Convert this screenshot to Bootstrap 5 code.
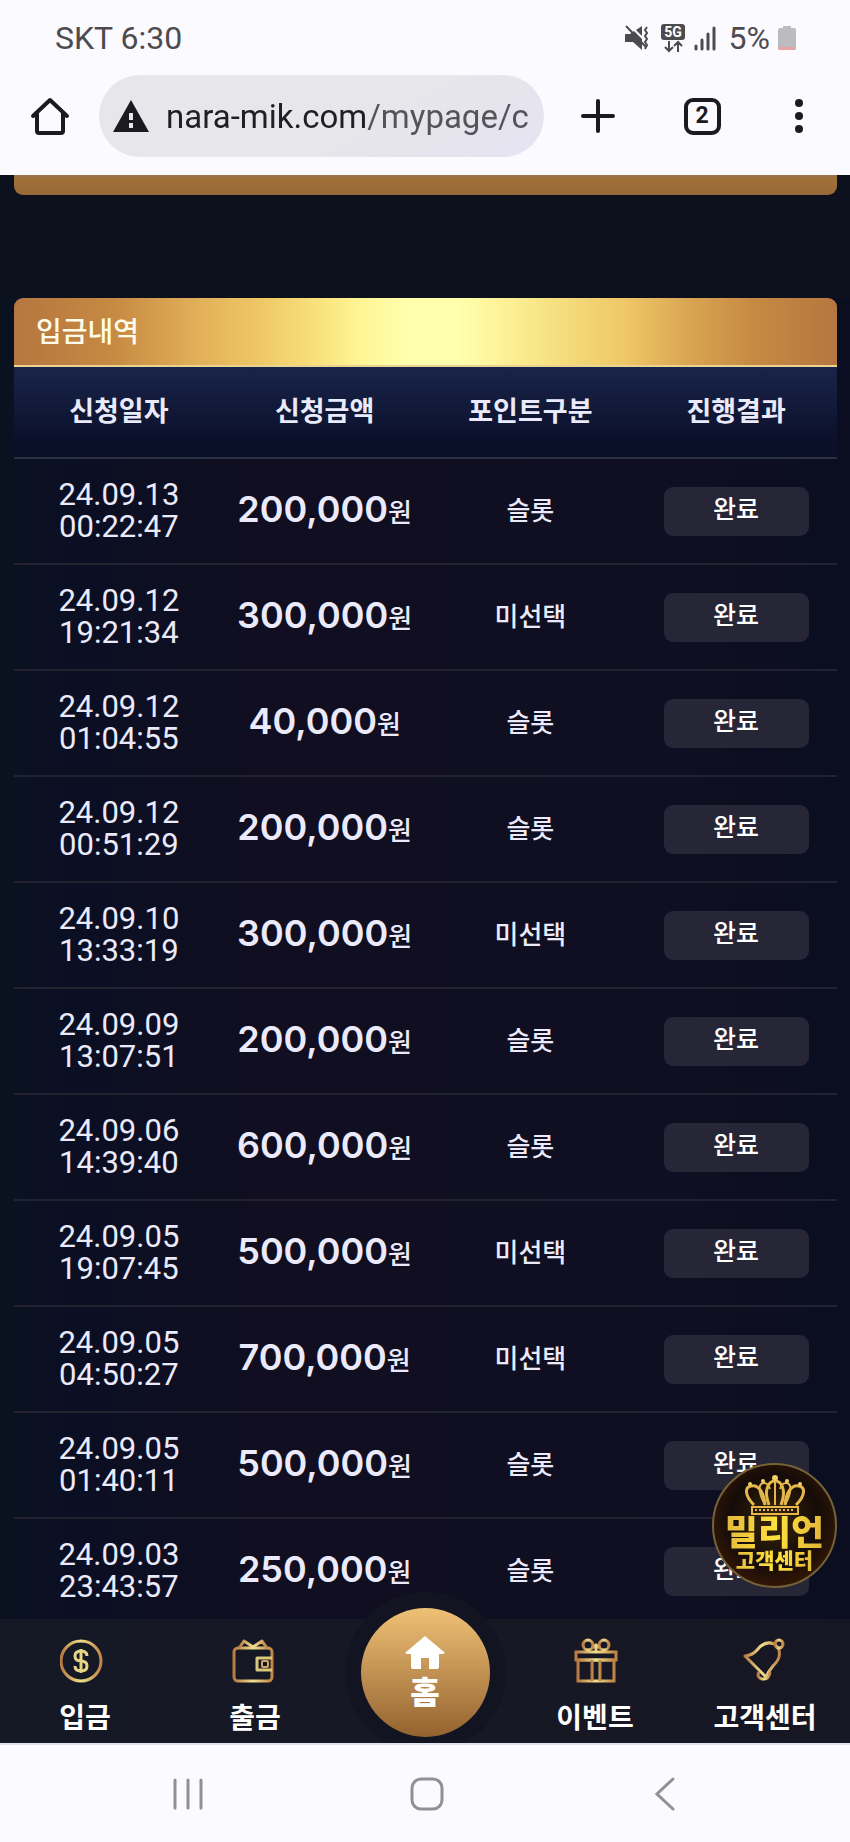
<!DOCTYPE html>
<html lang="ko">
<head>
<meta charset="utf-8">
<meta name="viewport" content="width=device-width, initial-scale=1">
<title>입금내역</title>
<link href="https://cdn.jsdelivr.net/npm/bootstrap@5.3.0/dist/css/bootstrap.min.css" rel="stylesheet">
<style>
  body { font-family: Roboto, "Noto Sans CJK KR", sans-serif; background: #fbfaff; color: #eaeafa; }
  .status-bar { height: 75px; padding: 0 54px 0 55px; color: #4d4b50; font-size: 32px; }
  .status-bar svg, .tool-bar svg { display: block; }
  .tool-bar { height: 82px; padding: 0 30px 0 22px; margin-bottom: 18px; color: #1b1a20; }
  .tool-btn { border: 0; background: none; padding: 0; color: inherit; display: flex; flex-shrink: 0; align-items: center; justify-content: center; width: 56px; height: 56px; }
  .url-pill { background: linear-gradient(150deg, #e7e6eb 60%, #e4e3f1); min-width: 0; height: 82px; padding: 0 16px 0 13px; margin: 0 26px 0 21px; }
  .url-pill input { border: 0; outline: 0; padding: 0; font-size: 33px; height: 60px; min-width: 0; width: 100%;
    color: transparent; background: linear-gradient(90deg, #201f25 200px, #54525a 200px); -webkit-background-clip: text; background-clip: text; }
  .tab-count { width: 37px; height: 37px; border: 4px solid #1b1a20; border-radius: 9px; font-size: 23px; font-weight: 700; line-height: 28px; }
  .site { padding: 0 13px 0 14px; background: linear-gradient(90deg, #0a1220, #0b0f24 8%, #100e20 30%, #100e22 80%, #0a0e20); }
  .site-top { margin: 0 -13px 0 -14px; padding: 0 13px 0 14px; height: 123px; background: #0d111d; }
  .prev-card { height: 20px; border-radius: 0 0 9px 9px; background: linear-gradient(#977449, #a07038 20%, #996839); }
  .gold-title { height: 69px; margin: 0; padding: 2px 22px 0; font-size: 28px; font-weight: 500; color: #fffbea; border-radius: 9px 9px 0 0; border-bottom: 2px solid #e9d494;
    background: linear-gradient(90deg, #b67640, #c68a42 12%, #e3b25a 23%, #efc866 30%, #f7de78 36%, #fff595 42%, #ffffae 48%, #ffffae 54%, #fdf095 60%, #f3d978 68%, #f0c868 74%, #d9a552 82%, #c68a42 90%, #b67640); }
  .history { table-layout: fixed; width: 100%; text-align: center; border-collapse: separate; border-spacing: 0; }
  .history th { height: 92px; padding: 0 0 0 4px; font-size: 27px; font-weight: 700; border-bottom: 2px solid #2c3043; background: linear-gradient(#19244a, #0b1029 85%); }
  .history td { height: 106px; padding: 0 0 0 4px; vertical-align: middle; border-bottom: 2px solid #222230; font-size: 26px; font-weight: 500; }
  .history td.when { font-size: 31px; font-weight: 400; line-height: 32px; }
  .amount { font-family: Inter, "Noto Sans CJK KR", sans-serif; font-size: 36px; font-weight: 600; line-height: 40px; }
  .won { font-size: 26px; font-weight: 500; }
  .done { width: 145px; height: 49px; border: 0; border-radius: 9px; background: #262637; color: #fff; font-size: 25px; font-weight: 500; padding: 0 0 2px; line-height: 40px; }
  .dock { height: 124px; background: linear-gradient(90deg, #151925, #171723); position: relative; clip-path: inset(-40px 0 0 0); }
  .dock a { flex: 1 1 0; color: #fff; text-decoration: none; font-size: 28px; font-weight: 700; line-height: 36px; text-align: center; }
  .dock-link { padding-top: 17px; }
  .dock-link svg { display: block; margin: 0 auto 15px; }
  .home-ball { width: 129px; height: 129px; margin: -11px auto 0; border-radius: 50%; background: linear-gradient(#efc176, #94622f); box-shadow: 0 0 0 16px #131422; padding-top: 28px; font-size: 32px; font-weight: 900; }
  .home-ball svg { display: block; margin: 0 auto 5px; }
  .help { position: absolute; right: 13px; bottom: 254px; width: 125px; height: 125px; border: 2px solid #756236; border-radius: 50%; text-decoration: none; text-align: center;
    background: radial-gradient(circle at 50% 45%, #3a240d, #140c08 50%, #341706 75%, #0e0a08); z-index: 3; }
  .help svg { display: block; margin: 9px auto 0; }
  .help span { display: block; font-weight: 900; white-space: nowrap; background: linear-gradient(100deg, #d9aa3e, #ffe23c 50%, #d7a437); -webkit-background-clip: text; background-clip: text; color: transparent; }
  .help .brand { font-size: 36px; line-height: 34px; margin: 0 -4px; }
  .help .desk { font-size: 21px; line-height: 22px; }
  .system-nav { height: 99px; padding: 0 157px 0 160px; border-top: 2px solid #e2e2ee; }
  .system-nav .tool-btn { color: #929097; }
</style>
</head>
<body>
<div class="d-flex flex-column vh-100 position-relative overflow-hidden">
  <header>
    <div class="status-bar d-flex align-items-center">
      <span class="me-auto">SKT 6:30</span>
      <svg width="24" height="26" viewBox="0 0 24 26" fill="currentColor"><path d="M0 9h5l4-3 8 8v11l-9-8H0zM11 5l6-4v10z"/><path d="M1 1l20 21" stroke="currentColor" stroke-width="2"/><path d="M22 2l-2 3 2 3-2 3 2 3-2 3 2 3-2 4" fill="none" stroke="currentColor" stroke-width="2"/></svg>
      <svg class="ms-2" width="32" height="30" viewBox="0 0 32 30"><rect x="4" y="1" width="24" height="16" rx="3" fill="#4d4b50"/><text x="16" y="14" text-anchor="middle" font-size="14" font-weight="700" font-family="Roboto" fill="#fff">5G</text><path d="M12 18v10m-4-4l4 4 4-4M21 29V19m-4 4l4-4 4 4" fill="none" stroke="#4d4b50" stroke-width="2"/></svg>
      <svg class="ms-1" width="24" height="26" viewBox="0 0 24 26" stroke="currentColor" stroke-width="3" stroke-linecap="round"><path d="M3 21v3M9 15v9M15 9v15M21 3v21"/></svg>
      <span class="ms-2 ps-1">5%</span>
      <svg class="ms-2" width="18" height="26" viewBox="0 0 18 26"><path d="M5 1h8v2h3q2 0 2 2v18q0 2-2 2H2q-2 0-2-2V5q0-2 2-2h3z" fill="#bcbbc0"/><path d="M0 22h18v1q0 2-2 2H2q-2 0-2-2z" fill="#e5a4a4"/></svg>
    </div>
    <div class="tool-bar d-flex align-items-center">
      <button class="tool-btn" type="button" aria-label="홈"><svg width="40" height="40" viewBox="0 0 40 40" fill="none" stroke="currentColor" stroke-width="4" stroke-linecap="round" stroke-linejoin="round"><path d="M3 20L20 4l17 16M7 17v18q0 2 2 2h22q2 0 2-2V17"/></svg></button>
      <div class="url-pill rounded-pill d-flex align-items-center flex-fill">
        <svg class="flex-shrink-0" width="38" height="34" viewBox="0 0 38 34"><path d="M19 1l18 32H1z" fill="#1b1a20"/><path d="M19 14v7m0 3v5" stroke="#e7e6eb" stroke-width="4"/></svg>
        <input class="ms-3" type="text" value="nara-mik.com/mypage/c" aria-label="주소">
      </div>
      <button class="tool-btn" type="button" aria-label="새 탭"><svg width="34" height="34" viewBox="0 0 34 34" stroke="currentColor" stroke-width="4" stroke-linecap="round"><path d="M17 2v30M2 17h30"/></svg></button>
      <button class="tool-btn mx-5" type="button" aria-label="탭 2개"><span class="tab-count">2</span></button>
      <button class="tool-btn w-auto px-3" type="button" aria-label="메뉴"><svg width="10" height="36" viewBox="0 0 10 36" fill="currentColor"><circle cx="5" cy="5" r="4"/><circle cx="5" cy="18" r="4"/><circle cx="5" cy="31" r="4"/></svg></button>
    </div>
  </header>

  <main class="site flex-fill overflow-hidden">
    <div class="site-top"><div class="prev-card"></div></div>
    <h1 class="gold-title d-flex align-items-center">입금내역</h1>
    <table class="history">
      <thead><tr><th>신청일자</th><th>신청금액</th><th>포인트구분</th><th>진행결과</th></tr></thead>
      <tbody>
        <tr><td class="when">24.09.13<br>00:22:47</td><td><span class="amount">200,000</span><span class="won">원</span></td><td>슬롯</td><td><button class="done" type="button">완료</button></td></tr>
        <tr><td class="when">24.09.12<br>19:21:34</td><td><span class="amount">300,000</span><span class="won">원</span></td><td>미선택</td><td><button class="done" type="button">완료</button></td></tr>
        <tr><td class="when">24.09.12<br>01:04:55</td><td><span class="amount">40,000</span><span class="won">원</span></td><td>슬롯</td><td><button class="done" type="button">완료</button></td></tr>
        <tr><td class="when">24.09.12<br>00:51:29</td><td><span class="amount">200,000</span><span class="won">원</span></td><td>슬롯</td><td><button class="done" type="button">완료</button></td></tr>
        <tr><td class="when">24.09.10<br>13:33:19</td><td><span class="amount">300,000</span><span class="won">원</span></td><td>미선택</td><td><button class="done" type="button">완료</button></td></tr>
        <tr><td class="when">24.09.09<br>13:07:51</td><td><span class="amount">200,000</span><span class="won">원</span></td><td>슬롯</td><td><button class="done" type="button">완료</button></td></tr>
        <tr><td class="when">24.09.06<br>14:39:40</td><td><span class="amount">600,000</span><span class="won">원</span></td><td>슬롯</td><td><button class="done" type="button">완료</button></td></tr>
        <tr><td class="when">24.09.05<br>19:07:45</td><td><span class="amount">500,000</span><span class="won">원</span></td><td>미선택</td><td><button class="done" type="button">완료</button></td></tr>
        <tr><td class="when">24.09.05<br>04:50:27</td><td><span class="amount">700,000</span><span class="won">원</span></td><td>미선택</td><td><button class="done" type="button">완료</button></td></tr>
        <tr><td class="when">24.09.05<br>01:40:11</td><td><span class="amount">500,000</span><span class="won">원</span></td><td>슬롯</td><td><button class="done" type="button">완료</button></td></tr>
        <tr><td class="when">24.09.03<br>23:43:57</td><td><span class="amount">250,000</span><span class="won">원</span></td><td>슬롯</td><td><button class="done" type="button">완료</button></td></tr>
      </tbody>
    </table>
  </main>

  <nav class="dock d-flex flex-shrink-0">
    <svg class="position-absolute" width="0" height="0"><defs><linearGradient id="gold" x1="0" x2="1"><stop offset="0" stop-color="#b87a42"/><stop offset=".5" stop-color="#efe08c"/><stop offset="1" stop-color="#c08446"/></linearGradient></defs></svg>
    <a class="dock-link" href="#"><svg width="50" height="50" viewBox="0 0 50 50" fill="none" stroke="url(#gold)" stroke-width="3"><circle cx="21" cy="25" r="20"/><path d="M27 20q0-5-6-5t-6 5 6 5 6 5-6 5-6-5M21 13v24" stroke="#e6d586"/></svg>입금</a>
    <a class="dock-link" href="#"><svg width="50" height="50" viewBox="0 0 50 50" fill="none" stroke="url(#gold)" stroke-width="3" stroke-linejoin="round"><rect x="4" y="12" width="38" height="33" rx="4"/><path d="M9 12l5-7 9 6 9-6 5 7"/><path d="M42 22H27v12h15" stroke="#dcc67a"/><rect x="32" y="25" width="6" height="6" rx="1" stroke="#cba664" stroke-width="2"/></svg>출금</a>
    <a href="#"><div class="home-ball"><svg width="40" height="34" viewBox="0 0 40 34" fill="#fff"><path d="M20 0l19 16q2 2-2 2h-3v13q0 2-2 2h-8V22h-8v11H8q-2 0-2-2V18H3q-4 0-2-2z"/></svg>홈</div></a>
    <a class="dock-link" href="#"><svg width="50" height="50" viewBox="0 0 50 50" fill="none" stroke="url(#gold)" stroke-width="3"><rect x="6" y="16" width="40" height="8"/><rect x="8" y="24" width="36" height="21"/><path d="M22 24v21M30 24v21"/><circle cx="18" cy="9" r="5"/><circle cx="34" cy="9" r="5"/><path d="M22 12l4-3 4 3M26 9v6"/></svg>이벤트</a>
    <a class="dock-link" href="#"><svg width="50" height="50" viewBox="0 0 50 50" fill="none" stroke="url(#gold)" stroke-width="3" stroke-linejoin="round"><path d="M5 20q8-1 12-6Q25 4 34 8q7 4 5 13-1 4-6 9-5 6-7 11Z"/><circle cx="39" cy="8" r="4"/><path d="M19 36q-3 5 3 7 7 1 8-7"/></svg>고객센터</a>
  </nav>

  <a class="help" href="#" aria-label="밀리언 고객센터">
    <svg width="60" height="42" viewBox="0 0 60 42" fill="none" stroke="#e3b74a" stroke-width="3"><path d="M9 31C-1 21 0 13 6 12 13 10 19 18 20 31M51 31C61 21 60 13 54 12 47 10 41 18 40 31"/><path d="M20 31C11 14 15 9 19 9 22 9 24 12 25 15M40 31C49 14 45 9 41 9 38 9 36 12 35 15" stroke-width="2"/><path d="M24 31C18 15 24 7 30 7 36 7 42 15 36 31"/><path d="M30 7v24" stroke-width="2"/><path d="M7 33h46v7H7z" stroke-width="2"/><path d="M10 36h40" stroke-dasharray="2 2" stroke-width="2"/><g fill="#f3ce65" stroke="none"><circle cx="30" cy="4" r="3"/><circle cx="18" cy="7" r="2"/><circle cx="42" cy="7" r="2"/><circle cx="5" cy="10" r="2"/><circle cx="55" cy="10" r="2"/></g></svg>
    <span class="brand">밀리언</span><span class="desk">고객센터</span>
  </a>

  <footer class="system-nav d-flex flex-shrink-0 align-items-center justify-content-between">
    <button class="tool-btn" type="button" aria-label="최근 앱"><svg width="32" height="34" viewBox="0 0 32 34" stroke="currentColor" stroke-width="3" stroke-linecap="round"><path d="M3 3v28M16 3v28M29 3v28"/></svg></button>
    <button class="tool-btn" type="button" aria-label="홈 화면"><svg width="34" height="34" viewBox="0 0 34 34" fill="none" stroke="currentColor" stroke-width="3"><rect x="2" y="2" width="30" height="30" rx="9"/></svg></button>
    <button class="tool-btn" type="button" aria-label="뒤로"><svg width="20" height="34" viewBox="0 0 20 34" fill="none" stroke="currentColor" stroke-width="3" stroke-linecap="round"><path d="M18 2L2 17l16 15"/></svg></button>
  </footer>
</div>
<script src="https://cdn.jsdelivr.net/npm/bootstrap@5.3.0/dist/js/bootstrap.bundle.min.js"></script>
</body>
</html>
